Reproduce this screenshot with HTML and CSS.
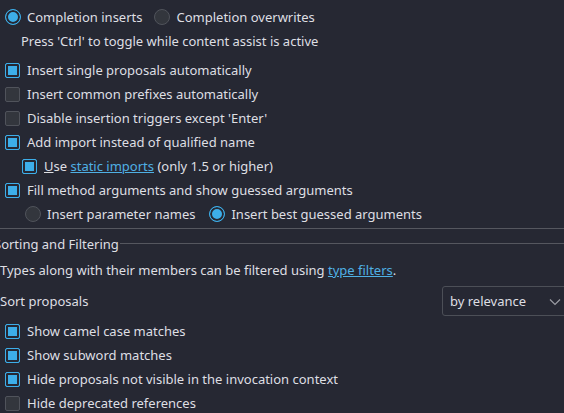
FILE: index.html
```html
<!DOCTYPE html>
<html>
<head>
<meta charset="utf-8">
<link rel="stylesheet" href="styles.css">
</head>
<body>
<div class="page">
  <div class="row">
    <span class="opt"><span class="radio on"></span>Completion inserts</span>
    <span class="opt"><span class="radio"></span>Completion overwrites</span>
  </div>
  <div class="row note">Press 'Ctrl' to toggle while content assist is active</div>
  <div class="row first"><span class="check on"></span>Insert single proposals automatically</div>
  <div class="row"><span class="check"></span>Insert common prefixes automatically</div>
  <div class="row"><span class="check"></span>Disable insertion triggers except 'Enter'</div>
  <div class="row"><span class="check on"></span>Add import instead of qualified name</div>
  <div class="row sub"><span class="check on"></span><u>U</u>se&nbsp;<a class="link">static imports</a>&nbsp;(only 1.5 or higher)</div>
  <div class="row"><span class="check on"></span>Fill method arguments and show guessed arguments</div>
  <div class="row subr">
    <span class="opt wide"><span class="radio"></span>Insert parameter names</span>
    <span class="opt"><span class="radio on"></span>Insert best guessed arguments</span>
  </div>
  <div class="group-end"></div>
  <div class="legend"><span class="legend-text">Sorting and Filtering</span><span class="legend-line"></span></div>
  <div class="row plain">Types along with their members can be filtered using&nbsp;<a class="link">type filters</a>.</div>
  <div class="row plain sort">
    <span>Sort proposals</span>
    <span class="select">by relevance
      <svg class="chev" width="12" height="8" viewBox="0 0 12 8"><path d="M1 1.5 L6 6.5 L11 1.5" fill="none" stroke="#9a9ca3" stroke-width="1.2"/></svg>
    </span>
  </div>
  <div class="row"><span class="check on"></span>Show camel case matches</div>
  <div class="row"><span class="check on"></span>Show subword matches</div>
  <div class="row"><span class="check on"></span>Hide proposals not visible in the invocation context</div>
  <div class="row"><span class="check"></span>Hide deprecated references</div>
</div>
</body>
</html>
```
FILE: styles.css
```css
html, body {
  margin: 0;
  padding: 0;
  background: #262833;
  overflow: hidden;
}
.page {
  font-family: "Noto Sans", sans-serif;
  font-size: 13px;
  color: #dedfe3;
  padding-top: 5px;
  display: flex;
  flex-direction: column;
  width: 564px;
}
.row {
  height: 24px;
  display: flex;
  align-items: center;
  padding-left: 5px;
  white-space: nowrap;
}
.note { padding-left: 21px; }
.first { margin-top: 5px; }
.sub { padding-left: 22px; }
.subr { padding-left: 25px; }
.plain { padding-left: 0; }
.opt {
  display: inline-flex;
  align-items: center;
  margin-right: 12px;
}
.opt.wide { margin-right: 14px; }
.check {
  width: 13px;
  height: 13px;
  border: 1px solid #50535b;
  background: #33363d;
  border-radius: 2px;
  margin-right: 7px;
  flex: none;
  box-sizing: content-box;
}
.check.on {
  border-color: #3daee9;
  background: #3daee9;
  box-shadow: inset 0 0 0 2px #262833;
}
.radio {
  width: 14px;
  height: 14px;
  border: 1px solid #50535b;
  background: #33363d;
  border-radius: 50%;
  margin-right: 6px;
  flex: none;
}
.radio.on {
  border-color: #3daee9;
  background: #3daee9;
  box-shadow: inset 0 0 0 2px #262833;
}
.link {
  color: #4fb0e4;
  text-decoration: underline;
}
.group-end {
  height: 1px;
  background: #55575f;
  margin-top: 2px;
}
.legend {
  height: 29px;
  display: flex;
  align-items: center;
  margin-left: -6px;
}
.legend-line {
  flex: 1;
  height: 1px;
  background: #55575f;
  margin-left: 1px;
}
.sort {
  height: 37px;
  justify-content: space-between;
}
.select {
  width: 130px;
  height: 30px;
  border: 1px solid #4c4f57;
  border-radius: 3px;
  box-sizing: border-box;
  display: flex;
  align-items: center;
  padding-left: 7px;
  position: relative;
  margin-right: -8px;
}
.chev {
  position: absolute;
  left: 106px;
  top: 11px;
}
```
